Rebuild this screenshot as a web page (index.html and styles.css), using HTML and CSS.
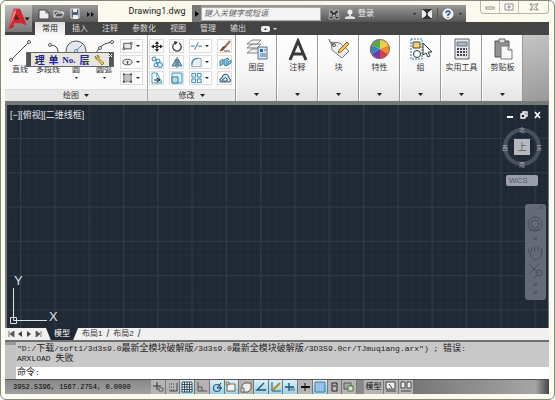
FILE: index.html
```html
<!DOCTYPE html>
<html lang="zh-CN">
<head>
<meta charset="utf-8">
<title>Drawing1.dwg</title>
<link rel="stylesheet" href="styles.css">
</head>
<body>
<div class="window">
  <header class="header">
    <button class="logo" aria-label="A">
      <svg width="27" height="27" viewBox="0 0 27 28">
        <path d="M9 4h6l7 17-5-2-3-1H9l-1 5-5 2z" fill="#a91f24"/>
        <path d="M8 4h4L8 20l-5 5z" fill="#e8494c"/>
        <path d="M12 4l3 1 7 16-6-3-4-8-2 5h5l2 4H8l-5 6 6-12z" fill="#cc2a30"/>
        <path d="M9 6l2 1-3 7-3 7z" fill="#f78a87"/>
        <path d="M11 10l3 5H9z" fill="#65181b"/>
        <path d="M20 13h5l-2.500 3z" fill="#111"/>
      </svg>
    </button>
    <div class="title-row">
      <div class="quick">
        <button aria-label="新建"><svg width="12" height="12" viewBox="0 0 12 12"><path d="M1 2h7l3 3v6H1z" fill="#eee" stroke="#444"/><path d="M8 2v3h3" fill="none" stroke="#555"/></svg></button>
        <button aria-label="打开"><svg width="12" height="12" viewBox="0 0 12 12"><path d="M1 9V3h4l1 1h4v2M1 9l3-4h7L9 9z" fill="#555" stroke="#e8e8e8"/></svg></button>
        <button aria-label="保存"><svg width="12" height="12" viewBox="0 0 12 12"><path d="M2 1h8v9H2z" fill="#526275" stroke="#e8e8e8"/><path d="M4 1h4v3H4zM4 7h5v4H4z" fill="#eee"/></svg></button>
        <button aria-label="更多"><svg width="12" height="12" viewBox="0 0 12 12"><path d="M3 4l3 2.500L3 9zM7 4l3 2.500L7 9z" fill="#111"/></svg></button>
      </div>
      <h1 class="doc">Drawing1.dwg</h1>
      <div class="info">
        <button class="expand" aria-label="展开"><svg width="8" height="12" viewBox="0 0 8 12"><path d="M2 3l4 3-4 3z" fill="#000"/></svg></button>
        <input class="search" type="text" aria-label="搜索" placeholder="键入关键字或短语">
        <button aria-label="查找"><svg width="12" height="12" viewBox="0 0 12 12"><path d="M2 2h3v2h2V2h3l1 9H7V7H5v4H1z" fill="#333" stroke="#ddd" stroke-width=".7"/><path d="M3 5v4M9 5v4" stroke="#eee"/></svg></button>
        <button class="login"><svg width="12" height="12" viewBox="0 0 12 12"><circle cx="6" cy="4" r="2.500" fill="#eee"/><path d="M5 6h2v2l4 1v2H1V9l4-1z" fill="#ddd"/></svg>登录</button>
        <span class="push"></span>
        <svg class="tri" width="5" height="4" viewBox="0 0 5 4"><path d="M1 1h3L2.500 3z"/></svg>
        <button aria-label="Exchange"><svg width="12" height="12" viewBox="0 0 12 12"><path d="M1 1h10v10H1z" fill="#333"/><path d="M1 2q8 4 0 8M11 2q-8 4 0 8" fill="#eee" stroke="#eee"/></svg></button>
        <span class="divider"></span>
        <button aria-label="帮助"><svg width="12" height="12" viewBox="0 0 12 12"><circle cx="6" cy="6" r="5" fill="#e9eff7" stroke="#fff"/><path d="M4 5q0-2 2-2t2 1.500-2 2V8M6 9v1" fill="none" stroke="#234c87" stroke-width="1.300"/></svg></button>
        <svg class="tri" width="5" height="4" viewBox="0 0 5 4"><path d="M1 1h3L2.500 3z"/></svg>
      </div>
      <div class="controls">
        <button aria-label="最小化"><svg width="10" height="8" viewBox="0 0 10 8"><path d="M1 4h8v2H1z" fill="#fff" stroke="#777" stroke-width=".8"/></svg></button>
        <button aria-label="还原"><svg width="10" height="8" viewBox="0 0 10 8"><path d="M1 1h8v6H1zM4 3h2v2H4z" fill="#fff" stroke="#777" stroke-width=".8"/></svg></button>
        <button class="close" aria-label="关闭"><svg width="10" height="8" viewBox="0 0 10 8"><path d="M1 1h2.500L5 2.500 6.500 1H9L6.500 4 9 7H6.500L5 5.500 3.500 7H1l2.500-3z" fill="#fff" stroke="#666" stroke-width=".8"/></svg></button>
      </div>
    </div>
    <nav class="tabs">
      <button class="on">常用</button><button>插入</button><button>注释</button><button>参数化</button><button>视图</button><button>管理</button><button>输出</button>
      <button class="mini" aria-label="最小化功能区"><svg width="18" height="8" viewBox="0 0 18 8"><rect x="1" y="1" width="9" height="6" rx="2" fill="#eee"/><path d="M4 5h3L5.500 3z" fill="#333"/><path d="M13 3h4l-2 2z" fill="#ddd"/></svg></button>
    </nav>
  </header>

  <section class="ribbon">
    <div class="panel draw">
      <div class="body">
        <div class="large-set">
          <button class="tool"><svg width="24" height="24" viewBox="0 0 24 24"><path d="M4 20L20 4" stroke="#444"/><circle cx="3" cy="21" r="1.500" fill="#fff" stroke="#555"/><circle cx="21" cy="3" r="1.500" fill="#fff" stroke="#555"/></svg><span>直线</span></button>
          <button class="tool"><svg width="24" height="24" viewBox="0 0 24 24"><path d="M14 6q8 0 8 7-1 7-8 7H3" fill="none" stroke="#444"/><circle cx="14" cy="6" r="1.500" fill="#fff" stroke="#555"/></svg><span>多段线</span></button>
          <button class="tool"><svg width="24" height="24" viewBox="0 0 24 24"><circle cx="12" cy="12" r="10" fill="#e4e8ed" stroke="#555"/><path d="M12 12l6-6" stroke="#4b83ab"/><circle cx="12" cy="12" r="1.500" fill="#fff" stroke="#4b83ab"/></svg><span>圆</span><svg class="drop" width="5" height="4" viewBox="0 0 5 4"><path d="M1 1h3L2.500 3z"/></svg></button>
          <button class="tool"><svg width="24" height="24" viewBox="0 0 24 24"><path d="M3 20Q4 5 20 3" fill="none" stroke="#444"/><circle cx="8" cy="9" r="1.500" fill="#fff" stroke="#555"/><circle cx="20" cy="3" r="1.500" fill="#fff" stroke="#555"/></svg><span>圆弧</span><svg class="drop" width="5" height="4" viewBox="0 0 5 4"><path d="M1 1h3L2.500 3z"/></svg></button>
        </div>
        <div class="smalls">
          <button class="small split" aria-label="矩形"><svg width="14" height="13" viewBox="0 0 14 13"><path d="M3 3h8v6H3z" fill="#e7e7e7" stroke="#444"/><path d="M10 2h2v2h-2zM2 8h2v2H2z" fill="#fff" stroke="#444" stroke-width=".8"/></svg></button>
          <button class="small split" aria-label="椭圆"><svg width="14" height="13" viewBox="0 0 14 13"><ellipse cx="7" cy="6" rx="5" ry="3" fill="#eee" stroke="#444"/><path d="M7 5v3M6 6h2" stroke="#444"/></svg></button>
          <button class="small split" aria-label="图案填充"><svg width="14" height="13" viewBox="0 0 14 13"><path d="M3 2h8v8H3z" fill="#ddd" stroke="#777"/><path d="M3 9l7-7M3 6l4-4M5 10l6-6M8 10l3-3" stroke="#777" stroke-width=".8"/><path d="M2 1h2v2H2zM10 1h2v2h-2zM2 9h2v2H2zM10 9h2v2h-2z" fill="#444"/></svg></button>
        </div>
      </div>
      <button class="foot">绘图<svg class="caret" width="5" height="4" viewBox="0 0 5 4"><path d="M0 0h5L2.500 3z"/></svg></button>
    </div>

    <div class="panel modify">
      <div class="body">
        <div class="mod-grid">
          <button class="small" aria-label="移动"><svg width="14" height="13" viewBox="0 0 14 13"><path d="M7 2v9M2 6.500h10" stroke="#222"/><path d="M5 4l2-3 2 3zM5 9l2 3 2-3zM4 4.500L1 6.500l3 2zM10 4.500l3 2-3 2z" fill="#222"/><path d="M6 5.500h2v2H6z" fill="#fff" stroke="#222"/></svg></button>
          <button class="small" aria-label="旋转"><svg width="14" height="13" viewBox="0 0 14 13"><path d="M5 3a4.300 4.300 0 1 0 4 0" fill="none" stroke="#444" stroke-width="1.300"/><path d="M4 1l4 1-3 3z" fill="#333"/></svg></button>
          <button class="small split" aria-label="修剪"><svg width="14" height="13" viewBox="0 0 14 13"><path d="M1 6h4M9 6h4" stroke="#4a98c4" stroke-width="1.300"/><path d="M5 10l4-8" stroke="#456"/></svg></button>
          <button class="small" aria-label="删除"><svg width="14" height="13" viewBox="0 0 14 13"><path d="M12 1L7 7" stroke="#b26a3c" stroke-width="2"/><path d="M8 6l-3 4-3 1 3-4z" fill="#a23a26" stroke="#653"/><path d="M6 11h6" stroke="#555"/></svg></button>
          <button class="small" aria-label="复制"><svg width="14" height="13" viewBox="0 0 14 13"><g fill="#d9edf8" stroke="#3a7fae"><circle cx="4" cy="3" r="2"/><circle cx="8" cy="5" r="2"/><circle cx="6" cy="9" r="2"/><circle cx="10" cy="9" r="2.500"/></g></svg></button>
          <button class="small" aria-label="镜像"><svg width="14" height="13" viewBox="0 0 14 13"><path d="M6 3v7H2zM8 3v7h4z" fill="#8cc5e4" stroke="#31647f" stroke-width=".9"/><path d="M7 1v11" stroke="#456"/></svg></button>
          <button class="small split" aria-label="圆角"><svg width="14" height="13" viewBox="0 0 14 13"><path d="M2 11V8q0-6 7-6h3v9z" fill="#edf1f4" stroke="#789" stroke-width=".8"/><path d="M2 9Q2 2 9 2" fill="none" stroke="#2e8dc2" stroke-width="1.300"/></svg></button>
          <button class="small" aria-label="分解"><svg width="14" height="13" viewBox="0 0 14 13"><path d="M2 5l3-2v5l-3 2zM6 4l3-2 2 1-2 2v5L6 9zM10 6l3-2v3l-3 2z" fill="#8ccbe8" stroke="#276b94" stroke-width=".8"/></svg></button>
          <button class="small" aria-label="拉伸"><svg width="14" height="13" viewBox="0 0 14 13"><path d="M2 1h5v10H2z" fill="#fff" stroke="#3a9bcd"/><path d="M7 1l5 10H7" fill="#e3f2fb" stroke="#3a9bcd"/><path d="M4 8h5M7 6l3 2-3 2" fill="none" stroke="#222"/></svg></button>
          <button class="small" aria-label="缩放"><svg width="14" height="13" viewBox="0 0 14 13"><path d="M2 1h10v10H2z" fill="#d8eef9" stroke="#3f91bc"/><path d="M2 5h6v6H2z" fill="#b1daef" stroke="#3f7798"/></svg></button>
          <button class="small split" aria-label="阵列"><svg width="14" height="13" viewBox="0 0 14 13"><path d="M2 1h4v4H2zM8 1h4v4H8zM2 7h4v4H2zM8 7h4v4H8z" fill="#eaf6fc" stroke="#2985b5"/></svg></button>
          <button class="small" aria-label="偏移"><svg width="14" height="13" viewBox="0 0 14 13"><path d="M2 10q-1-4 2-4 0-4 4-4 3 1 3 4 3 2 1 4z" fill="#c8dfeb" stroke="#345a70"/><path d="M4 9q0-2 2-2 1-3 3 0v2z" fill="#fff" stroke="#345a70"/></svg></button>
        </div>
      </div>
      <button class="foot">修改<svg class="caret" width="5" height="4" viewBox="0 0 5 4"><path d="M0 0h5L2.500 3z"/></svg></button>
    </div>

    <button class="panel big"><svg width="24" height="24" viewBox="0 0 24 24"><g fill="#f3f3f3" stroke="#777" stroke-width=".9"><path d="M2 15l5-4h9l-4 4z"/><path d="M2 10l5-4h9l-4 4z"/><path d="M2 6l5-4h9l-4 4z"/></g><path d="M13 9h9v12h-9z" fill="#d9e8f3" stroke="#5c6f80"/><path d="M15 11h3v3h-3z" fill="#2b6ca8"/><path d="M19 12h2M15 16h6M15 18h6" stroke="#47779e"/></svg><span>图层</span><svg class="caret" width="5" height="4" viewBox="0 0 5 4"><path d="M0 0h5L2.500 3z"/></svg></button>
    <button class="panel big"><svg width="24" height="24" viewBox="0 0 24 24"><path d="M4 22l8-19 8 19M7 16h10" fill="none" stroke="#383838" stroke-width="3"/></svg><span>注释</span><svg class="caret" width="5" height="4" viewBox="0 0 5 4"><path d="M0 0h5L2.500 3z"/></svg></button>
    <button class="panel big"><svg width="24" height="24" viewBox="0 0 24 24"><path d="M4 4l9 1 9 8-7 7L5 12z" fill="#edf0f3" stroke="#778"/><circle cx="7" cy="7" r="1.500" fill="#fff" stroke="#555"/><path d="M7 7Q2 5 2 1" fill="none" stroke="#555"/><path d="M20 4l2 2-8 8-3 1 1-3z" fill="#f3c64a" stroke="#89662a"/></svg><span>块</span><svg class="caret" width="5" height="4" viewBox="0 0 5 4"><path d="M0 0h5L2.500 3z"/></svg></button>
    <button class="panel big"><svg width="24" height="24" viewBox="0 0 24 24"><path d="M12 11V1a10 10 0 0 1 9 6z" fill="#f1cd43"/><path d="M12 11l9-4a10 10 0 0 1-1 9z" fill="#ef8d33"/><path d="M12 11l8 5a10 10 0 0 1-8 5z" fill="#d63f46"/><path d="M12 11v10a10 10 0 0 1-9-5z" fill="#743b9c"/><path d="M12 11l-9 5a10 10 0 0 1 0-9z" fill="#397fc6"/><path d="M12 11L3 7a10 10 0 0 1 9-6z" fill="#55a94c"/><circle cx="12" cy="11" r="9.500" fill="none" stroke="#777"/></svg><span>特性</span><svg class="caret" width="5" height="4" viewBox="0 0 5 4"><path d="M0 0h5L2.500 3z"/></svg></button>
    <button class="panel big"><svg width="24" height="24" viewBox="0 0 24 24"><path d="M2 1h11v20H2z" fill="none" stroke="#3b7295" stroke-dasharray="2 1"/><path d="M4 4h7v6H4z" fill="#f7d36c" stroke="#444"/><circle cx="8" cy="16" r="3.500" fill="#fff" stroke="#333"/><path d="M14 5v12l3-2 2 4 2-1-2-4h4z" fill="#fff" stroke="#333"/></svg><span>组</span><svg class="caret" width="5" height="4" viewBox="0 0 5 4"><path d="M0 0h5L2.500 3z"/></svg></button>
    <button class="panel big"><svg width="24" height="24" viewBox="0 0 24 24"><path d="M5 1h14v20H5z" fill="#e6e8ea" stroke="#666"/><path d="M7 4h10v4H7z" fill="#a9bac4" stroke="#567" stroke-width=".8"/><path d="M7 11h10M7 14h10M7 17h10" stroke="#445" stroke-width="2" stroke-dasharray="2 1"/></svg><span>实用工具</span><svg class="caret" width="5" height="4" viewBox="0 0 5 4"><path d="M0 0h5L2.500 3z"/></svg></button>
    <button class="panel big"><svg width="24" height="24" viewBox="0 0 24 24"><path d="M4 3h14v16H4z" fill="#929292" stroke="#555"/><path d="M8 1h6v4H8z" fill="#ddd" stroke="#666"/><path d="M10 8h7l4 4v9H10z" fill="#f7f7f7" stroke="#777"/><path d="M17 8v4h4" fill="#ddd" stroke="#777"/></svg><span>剪贴板</span><svg class="caret" width="5" height="4" viewBox="0 0 5 4"><path d="M0 0h5L2.500 3z"/></svg></button>
    <div class="rest"></div>

    <div class="floating">
      <i class="grip"></i>
      <button>理</button><button>单</button><button class="no">No.</button><button>层</button>
      <button aria-label="设置"><svg width="12" height="12" viewBox="0 0 12 12"><path d="M2 2l1 3 2 1 4 5 2-2-5-4 0-3-2-1 1 2-1 1z" fill="#f4ce65" stroke="#8a6620" stroke-width=".8"/></svg></button>
      <button class="grip end" aria-label="关闭"><svg width="5" height="5" viewBox="0 0 5 5"><path d="M1 1l3 3M4 1L1 4" stroke="#fff"/></svg></button>
    </div>
  </section>

  <main class="canvas">
    <svg class="grid" width="100%" height="100%">
      <defs>
        <pattern id="minor" width="6.860" height="6.860" patternUnits="userSpaceOnUse" x="14" y="33"><path d="M.5 0v7M0 .5h7" stroke="#252d38" fill="none"/></pattern>
        <pattern id="major" width="34.300" height="34.300" patternUnits="userSpaceOnUse" x="13" y="33"><path d="M.5 0v35M0 .5h35" stroke="#303b46" fill="none"/></pattern>
      </defs>
      <rect width="100%" height="100%" fill="url(#minor)"/>
      <rect width="100%" height="100%" fill="url(#major)"/>
    </svg>
    <p class="view">[−][俯视][二维线框]</p>
    <div class="doc-controls">
      <button aria-label="最小化"><svg width="8" height="8" viewBox="0 0 8 8"><path d="M1 5h6v2H1z" fill="#fff"/></svg></button>
      <button aria-label="还原"><svg width="8" height="8" viewBox="0 0 8 8"><path d="M3 3V1h4v4H5M1 3h4v4H1z" fill="none" stroke="#fff" stroke-width="1.300"/></svg></button>
      <button aria-label="关闭"><svg width="8" height="8" viewBox="0 0 8 8"><path d="M1 1l5 6M6 1L1 7" stroke="#fff" stroke-width="1.600"/></svg></button>
    </div>
    <svg class="cube" width="42" height="44" viewBox="0 0 42 44">
      <circle cx="21" cy="22" r="17" fill="none" stroke="#48505b" stroke-width="4"/>
      <path d="M13 14h16v16H13z" fill="#b5b8bc"/>
      <text x="21" y="25" class="face">上</text>
      <text x="21" y="7" class="dir">北</text><text x="21" y="42" class="dir">南</text><text x="4" y="25" class="dir">西</text><text x="38" y="25" class="dir">东</text>
    </svg>
    <button class="wcs">WCS</button>
    <div class="navbar">
      <svg width="20" height="96" viewBox="0 0 20 96" fill="none" stroke="#454c58">
        <path d="M14 2l4 3M18 2l-4 3" stroke-width=".7"/>
        <circle cx="10" cy="20" r="7"/><circle cx="10" cy="20" r="4"/><path d="M4 26h11M9 34h3l-1.500 2z"/>
        <path d="M5 49l-2-4M5 49q2 7 6 7 5-1 6-9M7 48l-1-5M10 48l-1-6M13 47v-5M16 48l1-4"/>
        <path d="M4 60l10 10M14 60L4 70"/><circle cx="14" cy="69" r="3"/><path d="M12 71l-3 4M9 80h3l-1.500 2zM9 88h3l-1.500 2z"/>
      </svg>
    </div>
    <svg class="ucs" width="54" height="54" viewBox="0 0 54 54">
      <path d="M6.500 46.500V14M6.500 46.500H40" stroke="#dde1e5"/><path d="M3.500 43.500h6v6h-6z" fill="none" stroke="#dde1e5"/>
      <text x="7" y="11">Y</text><text x="42" y="47">X</text>
    </svg>
  </main>

  <nav class="sheets">
    <button aria-label="第一个"><svg width="9" height="8" viewBox="0 0 9 8"><path d="M2 1v6M7 1v6L3 4z" stroke="#555" fill="#555" stroke-width=".8"/></svg></button>
    <button aria-label="上一个"><svg width="9" height="8" viewBox="0 0 9 8"><path d="M6 1v6L2 4z" fill="#444"/></svg></button>
    <button aria-label="下一个"><svg width="9" height="8" viewBox="0 0 9 8"><path d="M2 1v6l4-3z" fill="#444"/></svg></button>
    <button aria-label="最后一个"><svg width="9" height="8" viewBox="0 0 9 8"><path d="M7 1v6M2 1v6l4-3z" stroke="#555" fill="#555" stroke-width=".8"/></svg></button>
    <button class="sheet on">模型</button>
    <button class="sheet">布局1</button><span class="slash">/</span>
    <button class="sheet">布局2</button><span class="slash">/</span>
  </nav>

  <section class="command">
    <div class="rail"></div>
    <div class="lines">
      <div class="history">
        <p>"D:/<b>下载</b>/soft1/3d3s9.0<b>最新全模块破解版</b>/3d3s9.0<b>最新全模块破解版</b>/3D3S9.0cr/TJmuqiang.arx") ; <b>错误</b>:</p>
        <p>ARXLOAD <b>失败</b></p>
      </div>
      <label class="prompt"><span><b>命令</b>:</span><input type="text"></label>
    </div>
  </section>

  <footer class="status">
    <p class="coords">3952.5396, 1567.2754, 0.0000</p>
    <div class="toggles">
      <button aria-label="推断约束"><svg width="12" height="12" viewBox="0 0 12 12"><path d="M5 1v8M1 5h8" stroke="#333"/><path d="M7 7h4v3H7z" fill="#ccc" stroke="#555"/></svg></button>
      <button aria-label="捕捉"><svg width="12" height="12" viewBox="0 0 12 12"><path d="M2 3h6M2 6h6M2 9h6" stroke="#444" stroke-dasharray="1 1"/><path d="M10 2v8H3" stroke="#444" fill="none"/></svg></button>
      <button class="on" aria-label="栅格"><svg width="12" height="12" viewBox="0 0 12 12"><path d="M1 1h10v10H1zM3.500 1v10M6 1v10M8.500 1v10M1 3.500h10M1 6h10M1 8.500h10" fill="#fff" stroke="#334a59"/></svg></button>
      <button aria-label="正交"><svg width="12" height="12" viewBox="0 0 12 12"><path d="M2 1v9h9M2 6h4v4" fill="none" stroke="#555"/></svg></button>
      <button class="on" aria-label="极轴"><svg width="12" height="12" viewBox="0 0 12 12"><circle cx="6" cy="7" r="3.500" fill="none" stroke="#28658a" stroke-width="1.200"/><path d="M6 7l4-5M6 7h5" stroke="#234"/></svg></button>
      <button class="on" aria-label="对象捕捉"><svg width="12" height="12" viewBox="0 0 12 12"><path d="M2 3h8v7H2z" fill="#f5f5ed" stroke="#666"/><path d="M1 1h3v3H1z" fill="#ddd48c" stroke="#777"/></svg></button>
      <button aria-label="三维捕捉"><svg width="12" height="12" viewBox="0 0 12 12"><path d="M2 4l3-2h6v6l-3 3H2z" fill="#eee" stroke="#654"/><path d="M1 7h3v4H1z" fill="#e3d2b4" stroke="#777"/></svg></button>
      <button class="on" aria-label="追踪"><svg width="12" height="12" viewBox="0 0 12 12"><path d="M9 2L2 9h9" fill="none" stroke="#24566f" stroke-width="1.300"/></svg></button>
      <button class="on" aria-label="动态坐标"><svg width="12" height="12" viewBox="0 0 12 12"><path d="M2 1v9h9" fill="none" stroke="#27536b"/><path d="M3 9l7-7" stroke="#b68c1c" stroke-width="2"/></svg></button>
      <button class="on" aria-label="动态输入"><svg width="12" height="12" viewBox="0 0 12 12"><path d="M5 2v8M1 6h9" stroke="#174f6b" stroke-width="1.300"/><path d="M6 7h5v3H6z" fill="#7aa9bd"/></svg></button>
      <button aria-label="线宽"><svg width="12" height="12" viewBox="0 0 12 12"><path d="M2 6h9" stroke="#111" stroke-width="2"/><path d="M6 2v8" stroke="#111"/></svg></button>
      <button class="on" aria-label="透明度"><svg width="12" height="12" viewBox="0 0 12 12"><path d="M1 1h10v10H1z" fill="#86bde7" stroke="#467da8"/><path d="M2 3h8M2 5h8M2 7h8M2 9h8" stroke="#b9dbf2" stroke-dasharray="1 1"/></svg></button>
      <button aria-label="快捷特性"><svg width="12" height="12" viewBox="0 0 12 12"><path d="M4 2h5v8H4z" fill="#bbb" stroke="#222"/><path d="M5 5h3" stroke="#222"/></svg></button>
      <button aria-label="选择循环"><svg width="12" height="12" viewBox="0 0 12 12"><path d="M1 2h7v6H1z" fill="#aaa" stroke="#555"/><path d="M5 5h5v5H5z" fill="#d5e6c9" stroke="#42772c"/></svg></button>
    </div>
    <button class="model">模型</button>
    <button class="space" aria-label="快速查看布局"><svg width="12" height="12" viewBox="0 0 12 12"><path d="M1 1h9v7H1z" fill="#eee" stroke="#444"/><path d="M4 3l3 4M1 10h10" stroke="#444"/></svg></button>
    <button class="space" aria-label="快速查看图形"><svg width="12" height="12" viewBox="0 0 12 12"><path d="M1 1h4v6H1zM7 1h4v6H7z" fill="#eee" stroke="#444"/><path d="M1 10h10" stroke="#444"/></svg></button>
    <div class="tail"></div>
  </footer>
</div>
</body>
</html>
```

FILE: styles.css
```css
* { box-sizing: border-box; }
body {
  margin: 0;
  background: #fff;
  font: 8px/10px "Liberation Sans", "Noto Sans CJK SC", sans-serif;
  color: #333;
}
button {
  border: 0;
  padding: 0;
  background: none;
  font: inherit;
  color: inherit;
  display: flex;
  align-items: center;
  justify-content: center;
}
p, h1 { margin: 0; font-weight: normal; }
b { font-weight: normal; }
svg { display: block; flex: none; }

.window {
  height: 100vh;
  display: flex;
  flex-direction: column;
  padding: 0 5px 5px 4px;
  border: 1px solid #85877f;
  border-radius: 6px;
  background: linear-gradient(90deg, #fdfcf0, #f7f6e6 50%, #fbfaee);
}

/* title bar and ribbon tabs */
.header {
  flex: none;
  display: grid;
  grid-template: 21px 13px / 27px 1fr;
}
.logo {
  grid-row: 1 / 3;
  margin: 4px 0 3px;
  background: linear-gradient(#bdbdbd, #777);
  box-shadow: 0 3px #444;
}
.title-row { display: flex; align-items: flex-start; }
.quick {
  display: flex;
  align-items: center;
  justify-content: space-between;
  width: 66px;
  height: 17px;
  margin-top: 4px;
  padding: 0 2px 0 6px;
  background: linear-gradient(#999, #5c5c5c);
}
.doc {
  width: 94px;
  margin-top: 4px;
  padding-left: 24px;
  text-align: center;
  font: 9px/12px Roboto, sans-serif;
  color: #222;
}
.info {
  display: flex;
  flex: 1;
  align-items: center;
  gap: 4px;
  height: 17px;
  margin-top: 4px;
  padding-right: 3px;
  background: linear-gradient(#999, #555);
}
.expand { width: 9px; height: 17px; margin-right: -4px; background: #777; }
.search {
  width: 120px;
  height: 14px;
  margin-right: 3px;
  padding: 0 2px;
  border: 1px solid #aaa;
  border-radius: 0;
  background: #f4f4f4;
  font: italic 8px/12px "Liberation Sans", "Noto Sans CJK SC", sans-serif;
}
.search::placeholder { color: #666; opacity: 1; }
.login { gap: 2px; color: #eee; }
.push { flex: 1; }
.divider { width: 1px; height: 12px; background: #555; }
.tri, .drop { fill: #222; }
.controls {
  display: flex;
  height: 13px;
  margin-left: 14px;
  border: 1px solid #b5b5aa;
  border-top: 0;
  border-radius: 0 0 4px 4px;
}
.controls button { width: 19px; border-right: 1px solid #c5c5ba; }
.controls .close { width: 29px; border: 0; }
.tabs {
  display: flex;
  padding-left: 3px;
  background: #444;
  color: #ddd;
}
.tabs button { padding: 1px 7px 0; }
.tabs .on { background: linear-gradient(#ddd, #f8f8f8); color: #222; }

/* ribbon */
.ribbon {
  position: relative;
  display: flex;
  flex: none;
  height: 66px;
  background: #fbfbfb;
}
.panel { display: flex; flex-direction: column; }
.draw { width: 143px; border-right: 1px solid #aaa; }
.modify { width: 88px; border-right: 1px solid #999; }
.body { flex: 1; display: flex; padding: 4px 1px 0; }
.foot { height: 12px; gap: 5px; background: #e8e8e8; border-top: 1px solid #ddd; }
.large-set { display: flex; gap: 4px; padding-left: 2px; }
.tool { width: 24px; flex-direction: column; justify-content: flex-start; white-space: nowrap; }
.tool span { margin-top: 2px; }
.drop { margin-top: 1px; }
.smalls { display: grid; align-content: start; gap: 2px; padding-left: 4px; }
.small {
  width: 15px;
  height: 14px;
  border: 1px solid #ddd;
  background: #fff;
}
.split { width: 23px; justify-content: space-between; }
.split::after {
  content: "";
  margin-right: 2px;
  border: 2px solid transparent;
  border-top-color: #222;
  border-bottom: 0;
}
.split svg { border-right: 1px solid #eee; }
.mod-grid {
  display: grid;
  grid-template-columns: 15px 15px 23px 15px;
  align-content: start;
  gap: 2px 5px;
}
.big {
  width: 41px;
  justify-content: flex-start;
  padding: 3px 0 4px;
  border-right: 1px solid #999;
  border-left: 1px solid #fff;
  background: linear-gradient(#fff, #f5f5f5 60%, #e4e4e4);
}
.big span { margin-top: 1px; white-space: nowrap; }
.big .caret { margin-top: auto; }
.caret { fill: #222; }
.rest { flex: 1; background: linear-gradient(160deg, #c5c5c5, #999); }
.floating {
  position: absolute;
  left: 21px;
  top: 17px;
  display: flex;
  align-items: center;
  justify-content: space-between;
  width: 88px;
  height: 15px;
  border: 1px solid #666;
  background: #e6e5df;
  color: #22229a;
  font: bold 10px/12px "Noto Sans CJK SC", sans-serif;
}
.floating .no { font: bold 9px/12px "Liberation Serif", serif; }
.grip { width: 4px; height: 13px; background: #555; }
.end { align-items: flex-start; }

/* drawing area */
.canvas {
  position: relative;
  flex: 1;
  min-height: 0;
  border: solid #747a78;
  border-width: 4px 1px 0 2px;
  background: #202833;
}
.grid { position: absolute; inset: 0; }
.view {
  position: absolute;
  left: 3px;
  top: 5px;
  color: #e5e7ea;
  font-size: 9px;
}
.doc-controls { position: absolute; right: 6px; top: 6px; display: flex; gap: 6px; }
.cube { position: absolute; right: 5px; top: 20px; }
.cube text { text-anchor: middle; fill: #a8adb4; }
.cube .dir { font-size: 6px; }
.cube .face { font-size: 9px; fill: #555a60; }
.wcs {
  position: absolute;
  right: 10px;
  top: 70px;
  width: 32px;
  height: 11px;
  justify-content: flex-start;
  padding-left: 3px;
  border-radius: 2px;
  background: #9a9dab;
  color: #555a68;
}
.navbar {
  position: absolute;
  right: 2px;
  top: 99px;
  width: 21px;
  border-radius: 3px;
  background: #646b77;
}
.ucs { position: absolute; left: 0; bottom: 0; }
.ucs text { fill: #dde1e5; font-size: 13px; }

/* layout tabs */
.sheets {
  display: flex;
  flex: none;
  align-items: center;
  height: 12px;
  padding-left: 2px;
  background: #f0f0f0;
}
.sheet { height: 12px; padding: 0 4px; }
.sheets .on {
  width: 32px;
  margin-left: 3px;
  background: #202833;
  color: #fff;
  clip-path: polygon(0 0, 100% 0, 85% 100%, 15% 100%);
}
.slash { font-size: 10px; }

/* command line */
.command {
  display: flex;
  flex: none;
  border-top: 2px solid #6e706e;
  background: #c8c8c8;
}
.rail { width: 11px; border-top: 3px solid #999; background: #c2c2c2; }
.lines { flex: 1; font: 8px/10px "Liberation Mono", "Noto Sans CJK SC", monospace; color: #222; }
.lines b { font-size: 9px; }
.history { height: 25px; padding: 2px 1px; overflow: hidden; white-space: nowrap; }
.prompt { display: flex; align-items: center; height: 12px; padding-left: 1px; background: #fff; }
.prompt input { flex: 1; min-width: 0; height: 10px; border: 0; padding: 0; font: inherit; outline: 0; }

/* status bar */
.status {
  display: flex;
  flex: none;
  height: 15px;
  border-top: 1px solid #555;
  background: #999;
}
.coords {
  width: 146px;
  padding-left: 8px;
  background: linear-gradient(#888, #a0a0a0);
  font: 7px/14px "Liberation Mono", monospace;
  color: #000;
}
.toggles { display: grid; grid-template-columns: repeat(14, 1fr); width: 206px; }
.toggles button, .space, .model { border-right: 1px solid #777; background: #b4b4b4; overflow: hidden; }
.toggles .on { background: linear-gradient(#d9f1fa, #9fcfe2); }
.model { width: 27px; border-left: 7px solid #888; color: #111; }
.space { width: 15px; }
.tail { flex: 1; background: linear-gradient(90deg, #777, #a5a5a5 90%, #444); }
```
